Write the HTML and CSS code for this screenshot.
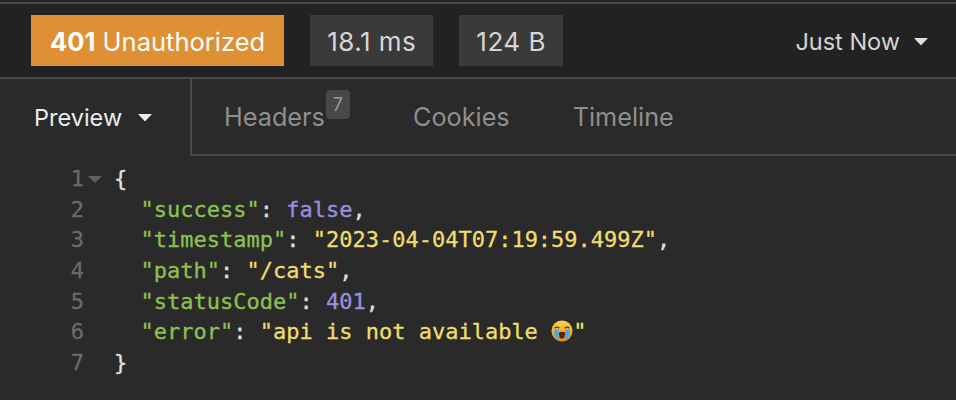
FILE: index.html
```html
<!DOCTYPE html>
<html lang="en">
<head>
<meta charset="utf-8">
<title>Response</title>
<link rel="stylesheet" href="styles.css">
</head>
<body>
<div class="app">
  <header class="status-bar">
    <span class="tag tag-warn"><b>401</b> Unauthorized</span>
    <span class="tag">18.1 ms</span>
    <span class="tag">124 B</span>
    <span class="history">Just Now<svg class="caret" viewBox="0 0 16 9"><path d="M1 1h14L8 8.5z"/></svg></span>
  </header>
  <nav class="tabs">
    <div class="tab-active">Preview<svg class="caret" viewBox="0 0 16 9"><path d="M1 1h14L8 8.5z"/></svg></div>
    <div class="tab-list">
      <span class="tab tab-headers">Headers<span class="badge">7</span></span>
      <span class="tab">Cookies</span>
      <span class="tab">Timeline</span>
    </div>
  </nav>
  <main class="code">
    <div class="line"><span class="num">1</span><svg class="fold" viewBox="0 0 16 9"><path d="M0 0h16L8 8z"/></svg><span class="src">{</span></div>
    <div class="line"><span class="num">2</span><span class="src">  <span class="key">"success"</span>: <span class="atom">false</span>,</span></div>
    <div class="line"><span class="num">3</span><span class="src">  <span class="key">"timestamp"</span>: <span class="str">"2023-04-04T07:19:59.499Z"</span>,</span></div>
    <div class="line"><span class="num">4</span><span class="src">  <span class="key">"path"</span>: <span class="str">"/cats"</span>,</span></div>
    <div class="line"><span class="num">5</span><span class="src">  <span class="key">"statusCode"</span>: <span class="atom">401</span>,</span></div>
    <div class="line"><span class="num">6</span><span class="src">  <span class="key">"error"</span>: <span class="str">"api is not available <svg class="emoji" viewBox="0 0 24 24" role="img" aria-label="loudly crying face"><defs><linearGradient id="face" x1="0" y1="0" x2="0" y2="1"><stop offset="0" stop-color="#fbd64a"/><stop offset="1" stop-color="#e88a1e"/></linearGradient></defs><circle cx="12" cy="12" r="11.5" fill="url(#face)"/><path d="M3.500 10.500h5v11.500a11 11 0 0 1-5-6zM15.500 10.500h5v5.500a11 11 0 0 1-5 6z" fill="#4fa6e6"/><path d="M4 9q2.500-2.500 5 0M15 9q2.500-2.500 5 0" fill="none" stroke="#5a3510" stroke-width="1.500"/><path d="M8.500 14q3.500-2.500 7 0l-1 5.500q-2.500 1.500-5 0z" fill="#5a2410"/></svg>"</span></span></div>
    <div class="line"><span class="num">7</span><span class="src">}</span></div>
  </main>
</div>
</body>
</html>
```
FILE: styles.css
```css
* { box-sizing: border-box; }
html, body { margin: 0; padding: 0; }
body {
  width: 956px;
  height: 400px;
  overflow: hidden;
  background: #222222;
  font-family: Inter, "Liberation Sans", sans-serif;
}
.app {
  display: flex;
  flex-direction: column;
  height: 398px;
  margin-top: 2px;
  border-top: 2px solid #4a4a4a;
  background: #2a2a2a;
}
.status-bar {
  height: 75px;
  display: flex;
  align-items: center;
  gap: 26px;
  padding: 0 27px 0 31px;
  background: #222222;
  border-bottom: 2px solid #4a4a4a;
}
.tag {
  height: 51px;
  padding: 2px 17px 0;
  display: flex;
  align-items: center;
  white-space: pre;
  background: #3a3a3a;
  color: #d6d6d6;
  font-size: 26px;
  letter-spacing: 0.5px;
}
.tag b { font-weight: 700; }
.tag-warn { background: #e09034; color: #fff; padding: 2px 19px 0; font-size: 25.500px; letter-spacing: 0; }
.history {
  margin-left: auto;
  padding-top: 2px;
  display: flex;
  align-items: center;
  gap: 13px;
  color: #d4d4d4;
  font-size: 23.500px;
}
.caret { width: 16px; height: 9px; fill: #e0e0e0; }
.tabs { height: 77px; display: flex; flex: none; }
.tab-active {
  width: 192px;
  display: flex;
  align-items: center;
  gap: 15px;
  padding-left: 34px;
  color: #ececec;
  font-size: 23.500px;
  border-right: 2px solid #4a4a4a;
}
.tab-active .caret { fill: #ececec; }
.tab-list {
  flex: 1;
  display: flex;
  align-items: center;
  gap: 63px;
  padding-left: 32px;
  border-bottom: 2px solid #4a4a4a;
  color: #8f8f8f;
  font-size: 25.250px;
}
.tab { display: flex; align-items: center; }
.tab-headers { position: relative; margin-right: 25px; }
.badge {
  position: absolute;
  left: 100%;
  top: -12px;
  width: 24px;
  height: 29px;
  margin-left: 1px;
  border-radius: 4px;
  background: #484848;
  color: #9a9a9a;
  font-size: 18px;
  display: flex;
  align-items: center;
  justify-content: center;
}
.code {
  flex: 1;
  padding-top: 8px;
  font-family: "DejaVu Sans Mono", monospace;
  font-size: 22px;
  line-height: 30.670px;
  color: #e0e0e0;
  -webkit-text-stroke: 0.3px;
}
.line { display: flex; height: 30.670px; white-space: pre; position: relative; }
.num { width: 84px; text-align: right; color: #6b6b6b; flex: none; }
.fold { position: absolute; left: 87px; top: 12px; width: 16px; height: 8px; fill: #5f5f5f; }
.src { margin-left: 30px; }
.key { color: #8cc152; }
.str { color: #efdd6c; }
.atom { color: #9a8fe0; }
.emoji { width: 22px; height: 22px; vertical-align: -3px; }
```
